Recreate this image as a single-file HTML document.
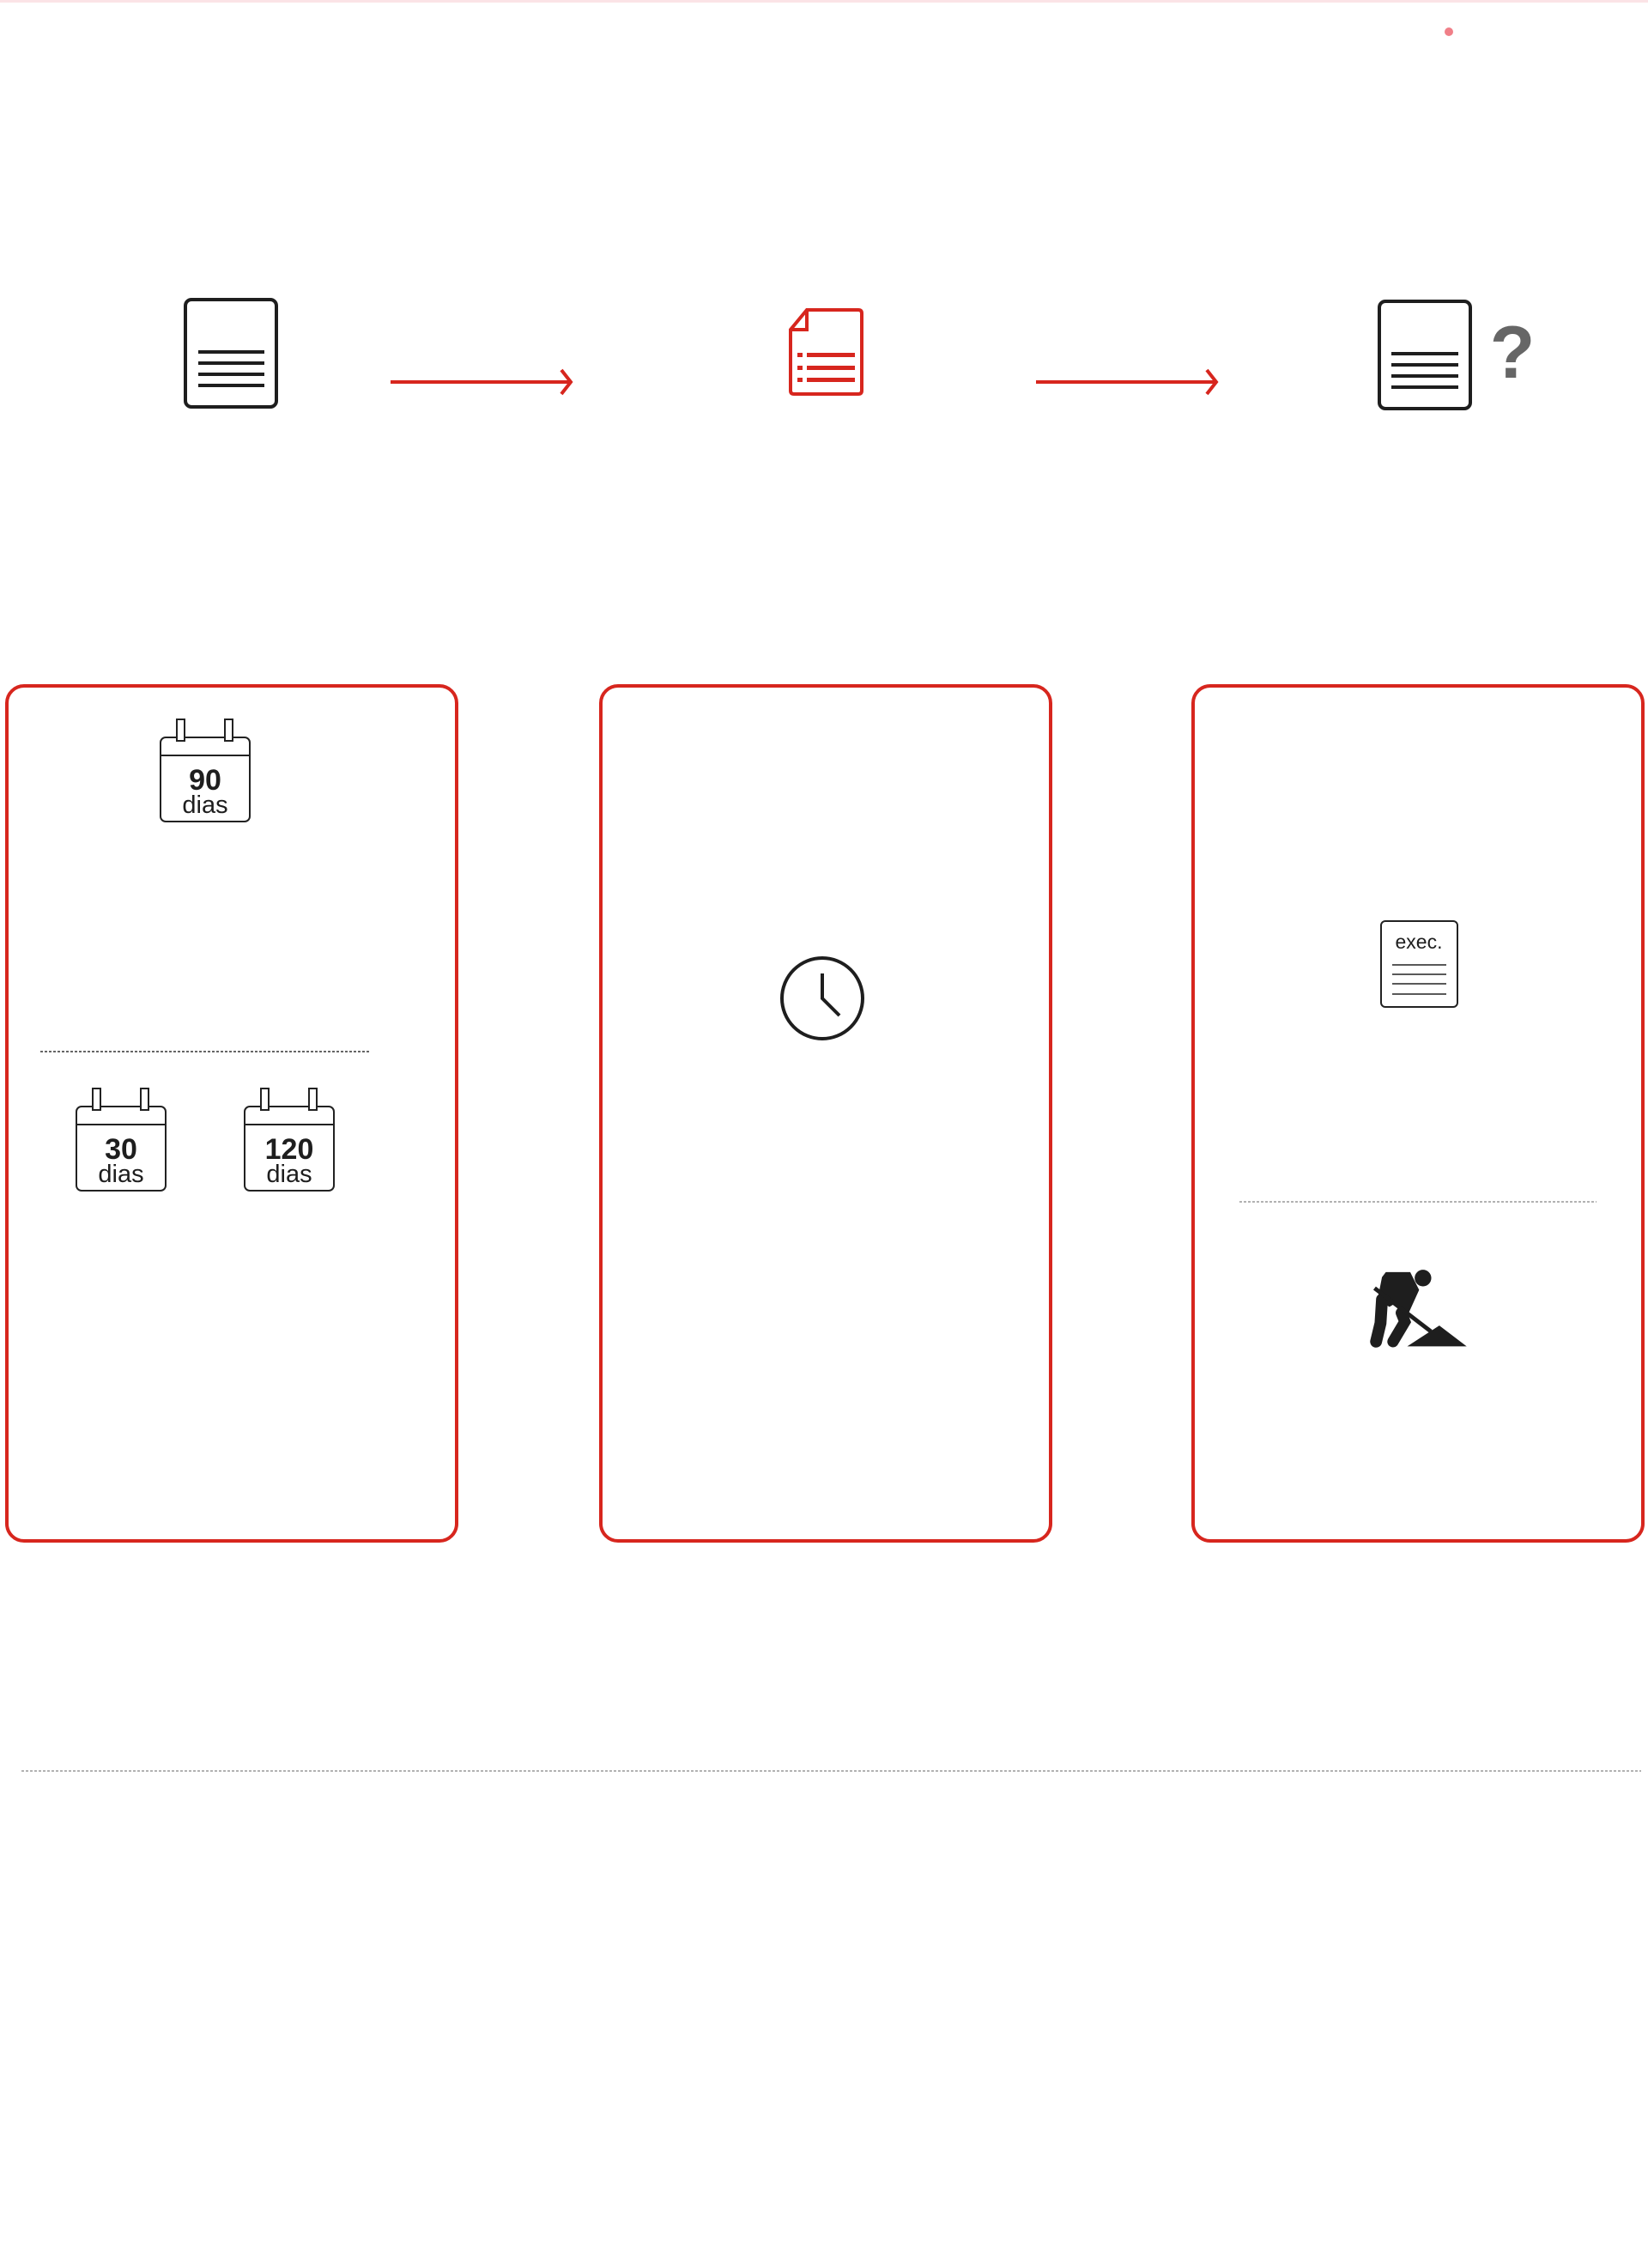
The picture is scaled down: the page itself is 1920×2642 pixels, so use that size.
<!DOCTYPE html>
<html><head><meta charset="utf-8"><style>
html,body{margin:0;padding:0;background:#fff;}
body{width:1920px;height:2642px;position:relative;overflow:hidden;font-family:"Liberation Sans",sans-serif;}
svg{position:absolute;left:0;top:0;}
</style></head><body>
<svg width="1920" height="2642" viewBox="0 0 1920 2642" xmlns="http://www.w3.org/2000/svg">
<defs>
<g id="cal">
<rect x="1" y="23" width="104" height="98" rx="6" fill="#fff" stroke="#222" stroke-width="2"/>
<line x1="1" y1="44" x2="105" y2="44" stroke="#222" stroke-width="2"/>
<rect x="20" y="2" width="9" height="25" fill="#fff" stroke="#222" stroke-width="2"/>
<rect x="76" y="2" width="9" height="25" fill="#fff" stroke="#222" stroke-width="2"/>
</g>
</defs>
<rect x="0" y="0" width="1920" height="3" fill="#fbe3e6"/>
<circle cx="1688" cy="37" r="5" fill="#f07f88"/>

<rect x="216" y="349" width="106" height="125" rx="7" fill="none" stroke="#1e1e1e" stroke-width="4"/>
<g stroke="#1e1e1e" stroke-width="4"><line x1="231" y1="410" x2="308" y2="410"/><line x1="231" y1="423" x2="308" y2="423"/><line x1="231" y1="436" x2="308" y2="436"/><line x1="231" y1="449" x2="308" y2="449"/></g>

<g stroke="#d7261e" stroke-width="4" fill="none">
<line x1="455" y1="445" x2="664" y2="445"/><path d="M654 431 L665 445 L654 459"/>
<line x1="1207" y1="445" x2="1416" y2="445"/><path d="M1406 431 L1417 445 L1406 459"/>
</g>

<g stroke="#d7261e" stroke-width="4" fill="none">
<path d="M940 361 L1000 361 Q1004 361 1004 365 L1004 455 Q1004 459 1000 459 L925 459 Q921 459 921 455 L921 384 L940 361 Z"/>
<path d="M940 361 L940 384 L921 384"/>
</g>
<g fill="#d7261e"><rect x="929" y="411" width="6" height="5"/><rect x="940" y="411" width="56" height="5"/><rect x="929" y="426" width="6" height="5"/><rect x="940" y="426" width="56" height="5"/><rect x="929" y="440" width="6" height="5"/><rect x="940" y="440" width="56" height="5"/></g>

<rect x="1607" y="351" width="106" height="125" rx="7" fill="none" stroke="#1e1e1e" stroke-width="4"/>
<g stroke="#1e1e1e" stroke-width="4"><line x1="1621" y1="412" x2="1699" y2="412"/><line x1="1621" y1="425" x2="1699" y2="425"/><line x1="1621" y1="438" x2="1699" y2="438"/><line x1="1621" y1="451" x2="1699" y2="451"/></g>
<text x="1762" y="440" text-anchor="middle" font-family="Liberation Sans, sans-serif" font-weight="bold" font-size="86" fill="#666">?</text>

<g fill="none" stroke="#d7261e" stroke-width="4">
<rect x="8" y="799" width="524" height="996" rx="20"/>
<rect x="700" y="799" width="524" height="996" rx="20"/>
<rect x="1390" y="799" width="524" height="996" rx="20"/>
</g>

<g transform="translate(186,836)"><use href="#cal"/>
<text x="53" y="84" text-anchor="middle" font-weight="bold" font-size="34" fill="#1e1e1e">90</text>
<text x="53" y="111" text-anchor="middle" font-size="29" fill="#1e1e1e">dias</text></g>
<g transform="translate(88,1266)"><use href="#cal"/>
<text x="53" y="84" text-anchor="middle" font-weight="bold" font-size="34" fill="#1e1e1e">30</text>
<text x="53" y="111" text-anchor="middle" font-size="29" fill="#1e1e1e">dias</text></g>
<g transform="translate(284,1266)"><use href="#cal"/>
<text x="53" y="84" text-anchor="middle" font-weight="bold" font-size="34" fill="#1e1e1e">120</text>
<text x="53" y="111" text-anchor="middle" font-size="29" fill="#1e1e1e">dias</text></g>

<line x1="47" y1="1225" x2="430" y2="1225" stroke="#333" stroke-width="1.5" stroke-dasharray="3 2"/>

<circle cx="958" cy="1163" r="47" fill="none" stroke="#1e1e1e" stroke-width="4"/>
<path d="M958 1134 L958 1163 L978 1183" fill="none" stroke="#1e1e1e" stroke-width="4"/>

<rect x="1609" y="1073" width="89" height="100" rx="5" fill="none" stroke="#222" stroke-width="2"/>
<text x="1653" y="1105" text-anchor="middle" font-size="23" fill="#1e1e1e">exec.</text>
<g stroke="#222" stroke-width="1.5"><line x1="1622" y1="1124" x2="1685" y2="1124"/><line x1="1622" y1="1135" x2="1685" y2="1135"/><line x1="1622" y1="1146" x2="1685" y2="1146"/><line x1="1622" y1="1158" x2="1685" y2="1158"/></g>

<line x1="1444" y1="1400" x2="1860" y2="1400" stroke="#999" stroke-width="1.5" stroke-dasharray="3 2"/>

<g transform="translate(1380,1057) scale(0.346)" fill="#1e1e1e">
<circle cx="803" cy="1248" r="28"/>
<path d="M665 1245 L678 1228 L760 1228 L790 1288 L752 1372 L712 1332 L690 1345 L650 1320 Z"/>
<path d="M665 1320 L660 1400 L645 1462" fill="none" stroke="#1e1e1e" stroke-width="40" stroke-linecap="round"/>
<path d="M730 1365 L742 1395 L702 1462" fill="none" stroke="#1e1e1e" stroke-width="38" stroke-linecap="round"/>
<line x1="640" y1="1282" x2="830" y2="1428" stroke="#1e1e1e" stroke-width="14"/>
<line x1="760" y1="1260" x2="722" y2="1330" stroke="#1e1e1e" stroke-width="26" stroke-linecap="round"/>
<path d="M750 1478 L858 1408 L950 1478 Z"/>
</g>

<line x1="25" y1="2063" x2="1912" y2="2063" stroke="#999" stroke-width="1.5" stroke-dasharray="3 2"/>
</svg>
</body></html>
